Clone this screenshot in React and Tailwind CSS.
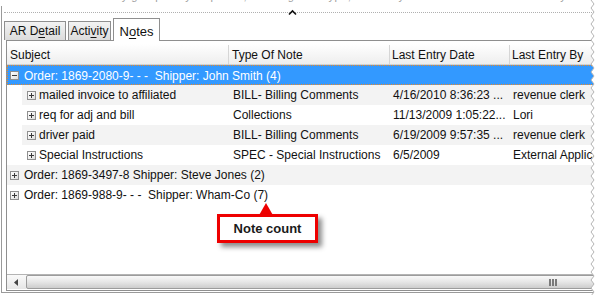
import React from "react";

function Box({ minus }) {
  return (
    <span className="relative inline-block shrink-0 w-[9px] h-[9px] border border-[#8f8f8f] bg-gradient-to-br from-white to-[#dedede]">
      <span className="absolute left-[1px] top-[3px] w-[5px] h-[1px] bg-[#3a3a3a]" />
      {!minus && <span className="absolute left-[3px] top-[1px] w-[1px] h-[5px] bg-[#3a3a3a]" />}
    </span>
  );
}

function SubRow({ gray, subject, type, date, by }) {
  return (
    <div className="h-[20px] pl-[15px] flex">
      <div className={`flex-1 flex items-center ${gray ? "bg-[#f3f3f3]" : "bg-white"}`}>
        <div className="w-[207px] flex items-center pl-[5px] gap-[3px] whitespace-pre">
          <Box />
          <span>{subject}</span>
        </div>
        <div className="w-[161px] pl-[4px] whitespace-nowrap overflow-hidden">{type}</div>
        <div className="w-[120px] pl-[3px] whitespace-nowrap overflow-hidden">{date}</div>
        <div className="flex-1 pl-[3px] whitespace-nowrap overflow-hidden">{by}</div>
      </div>
    </div>
  );
}

function OrderRow({ gray, text }) {
  return (
    <div className={`h-[20px] flex items-center pl-[3px] gap-[5px] whitespace-pre ${gray ? "bg-[#f3f3f3]" : "bg-white"}`}>
      <Box />
      <span>{text}</span>
    </div>
  );
}

export default function App() {
  const zig = [];
  for (let y = 0; y <= 300; y += 4) {
    zig.push(`${(y / 4) % 2 === 0 ? 3 : 6},${y}`);
  }
  const zigLine = zig.join(" ");
  return (
    <div className="relative w-[598px] h-[295px] bg-white overflow-hidden text-[12px] text-[#111] [font-family:'Liberation_Sans',Arial,sans-serif]">
      {/* torn top strip */}
      <div className="h-[6px] overflow-hidden pl-[10px]">
        <div className="mt-[-11px] text-[11px] leading-[14px] text-[#a0a0a0] whitespace-nowrap tracking-[0.5px]">
          Order Notes summary grouped by shipment, showing note type, last entry date and author of each entry
        </div>
      </div>

      {/* outer frame */}
      <div className="ml-[1px] h-[287px] border-l border-b border-[#9a9a9a] flex flex-col">
        {/* dotted strip with caret */}
        <div className="h-[10px] relative">
          <div className="absolute left-[2px] right-0 top-[6px] border-t border-dotted border-[#b0b0b0]" />
          <svg className="absolute left-[286px] top-[3px]" width="9" height="7" viewBox="0 0 9 7">
            <polyline points="1,5.5 4.5,2 8,5.5" fill="none" stroke="#111" strokeWidth="1.6" />
          </svg>
        </div>

        {/* tabs */}
        <div className="h-[24px] flex items-end pl-[2px] gap-[2px] relative z-10">
          <div className="h-[19px] w-[62px] border border-b-0 border-[#8f8f8f] bg-gradient-to-b from-[#f3f3f3] to-[#dcdcdc] flex items-center justify-center">
            <span>AR D<span className="underline underline-offset-2">e</span>tail</span>
          </div>
          <div className="h-[19px] w-[43px] border border-b-0 border-[#8f8f8f] bg-gradient-to-b from-[#f3f3f3] to-[#dcdcdc] flex items-center justify-center">
            <span>Acti<span className="underline underline-offset-2">v</span>ity</span>
          </div>
          <div className="h-[23px] w-[47px] mb-[-1px] border border-b-0 border-[#8f8f8f] bg-white flex items-start justify-center pt-[3px] text-[13px]">
            <span>N<span className="underline underline-offset-2">o</span>tes</span>
          </div>
        </div>

        {/* panel */}
        <div className="ml-[4px] h-[251px] border-l border-t border-b border-[#8f8f8f] pt-[3px] pb-[1px] flex flex-col">
          {/* header */}
          <div className="h-[21px] shrink-0 flex items-center border-b border-[#d2d2d2] bg-gradient-to-b from-white to-[#eeeeee] whitespace-nowrap pt-[1px]">
            <div className="w-[222px] h-full flex items-center pl-[3px] border-r border-[#d6d6d6]">Subject</div>
            <div className="w-[161px] h-full flex items-center pl-[3px] border-r border-[#d6d6d6]">Type Of Note</div>
            <div className="w-[120px] h-full flex items-center pl-[2px] border-r border-[#d6d6d6]">Last Entry Date</div>
            <div className="flex-1 h-full flex items-center pl-[2px]">Last Entry By</div>
          </div>

          {/* selected row */}
          <div className="h-[20px] shrink-0 flex items-center pl-[2px] gap-[5px] bg-[#3399ff] border border-dotted border-[#e8892a] text-white whitespace-pre pt-[1px]">
            <Box minus />
            <span>{"Order: 1869-2080-9- - -  Shipper: John Smith (4)"}</span>
          </div>
          <SubRow gray subject="mailed invoice to affiliated" type="BILL- Billing Comments" date="4/16/2010 8:36:23 ..." by="revenue clerk" />
          <SubRow subject="req for adj and bill" type="Collections" date="11/13/2009 1:05:22..." by="Lori" />
          <SubRow gray subject="driver paid" type="BILL- Billing Comments" date="6/19/2009 9:57:35 ..." by="revenue clerk" />
          <SubRow subject="Special Instructions" type="SPEC - Special Instructions" date="6/5/2009" by="External Application" />
          <OrderRow gray text="Order: 1869-3497-8 Shipper: Steve Jones (2)" />
          <OrderRow text={"Order: 1869-988-9- - -  Shipper: Wham-Co (7)"} />

          <div className="flex-1" />

          {/* horizontal scrollbar */}
          <div className="h-[15px] shrink-0 flex border-t border-[#b4b4b4] bg-[#f0f0f0]">
            <div className="w-[19px] flex items-center justify-center bg-gradient-to-b from-[#fafafa] to-[#e6e6e6]">
              <svg width="5" height="7" viewBox="0 0 5 7">
                <polygon points="4,0 4,7 0,3.5" fill="#444" />
              </svg>
            </div>
            <div className="flex-1 relative border border-[#9c9c9c] rounded-[2px] bg-gradient-to-b from-[#f9f9f9] via-[#e6e6e6] to-[#cdcdcd]">
              <div className="absolute left-[522px] top-[3px] flex gap-[1px]">
                <span className="w-[2px] h-[7px] bg-[#7a7a7a]" />
                <span className="w-[2px] h-[7px] bg-[#7a7a7a]" />
                <span className="w-[2px] h-[7px] bg-[#7a7a7a]" />
              </div>
            </div>
          </div>
        </div>
      </div>

      {/* callout */}
      <svg className="absolute left-[257px] top-[202px]" width="18" height="15" viewBox="0 0 18 15">
        <polygon points="9,1 17,15 1,15" fill="#ee0000" />
      </svg>
      <div className="absolute left-[217px] top-[214px] w-[101px] h-[29px] border-[3px] border-[#ee0000] bg-white shadow-[4px_4px_5px_rgba(0,0,0,0.45)] flex items-center justify-center">
        <span className="text-[13px] font-bold text-[#1a1a1a]">Note count</span>
      </div>

      {/* torn right edge */}
      <svg className="absolute right-0 top-0" width="10" height="295" viewBox="0 0 10 295">
        <polygon points={`${zigLine} 10,300 10,0`} fill="white" />
        <polyline points={zigLine} fill="none" stroke="#b5b5b5" strokeWidth="1" />
      </svg>
    </div>
  );
}
